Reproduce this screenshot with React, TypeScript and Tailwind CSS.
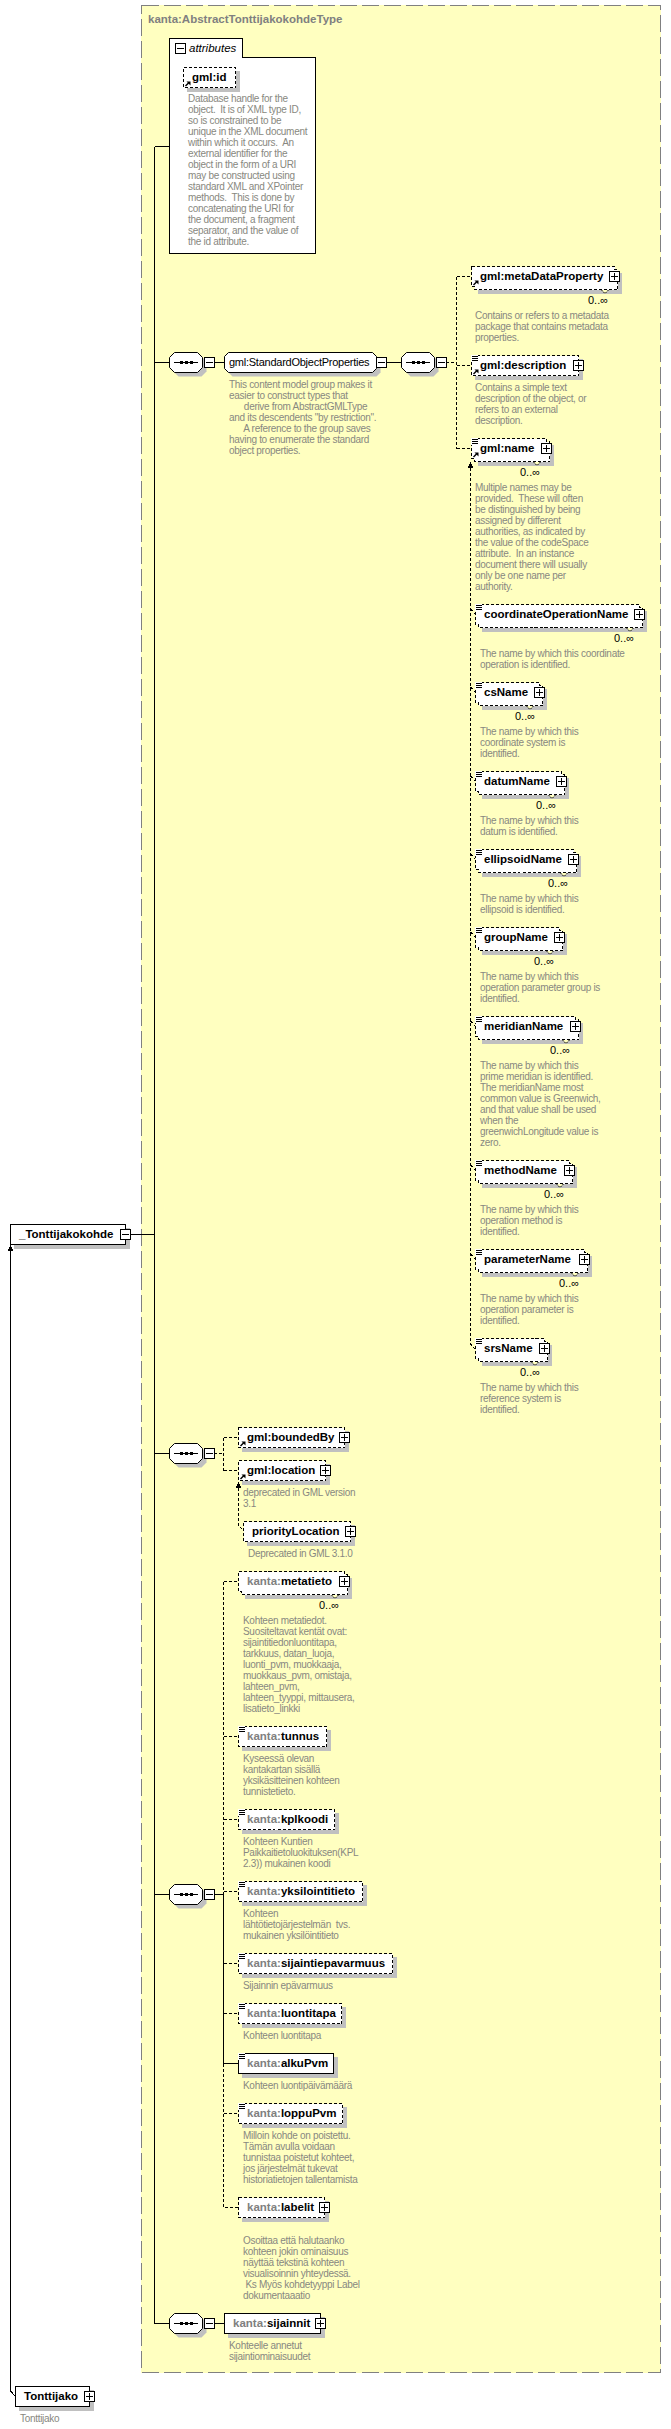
type BoxProps = {
  pos: string;
  w: number;
  prefix?: string;
  label: string;
  many?: boolean;
  solid?: boolean;
  bars?: boolean;
  link?: boolean;
  plus?: boolean;
  minus?: boolean;
};

const Toggle = ({ x, y, minus }: { x: number; y: number; minus?: boolean }) => (
  <g>
    <rect x={x + 0.5} y={y + 0.5} width={10} height={10} fill="#fff" stroke="#000" />
    <path d={`M${x + 2} ${y + 5.5}H${x + 9}`} stroke="#000" />
    {!minus && <path d={`M${x + 5.5} ${y + 2}V${y + 9}`} stroke="#000" />}
  </g>
);

// element node, with the stacked outline when it can occur many times
const Box = ({ pos, w, prefix, label, many, solid, bars, link, plus, minus }: BoxProps) => {
  const outline = many
    ? `0.5,0.5 ${w + 0.5},0.5 ${w + 0.5},3.5 ${w + 3.5},3.5 ${w + 3.5},23.5 3.5,23.5 3.5,20.5 0.5,20.5`
    : `0.5,0.5 ${w + 0.5},0.5 ${w + 0.5},20.5 0.5,20.5`;
  const off = many ? 7 : 4;
  return (
    <div className={`absolute ${pos}`}>
      <svg className="absolute left-0 top-0 overflow-visible" width={w + 12} height={30} shapeRendering="crispEdges">
        <rect x={off} y={off} width={w + 1} height={21} fill="#c0c0c0" />
        {many && (
          <polygon
            points={`${w - 13},23.5 ${w - 9},27.5 ${w - 5},23.5`}
            fill="#ffffc0"
            stroke="#000"
            strokeDasharray="2 1"
            shapeRendering="auto"
          />
        )}
        <polygon points={outline} fill="#fff" stroke="#000" strokeDasharray={solid ? undefined : "3 2"} />
        {bars && (
          <g>
            <rect x={0} y={0} width={7} height={7} fill="#fff" />
            <path d="M1 1.5H7M1 3.5H7M1 5.5H7" stroke="#000" />
          </g>
        )}
        {link && (
          <g shapeRendering="auto">
            <path d="M2.5 19L6 15.5" stroke="#000" strokeWidth={1.5} />
            <path d="M3.5 14.5H7.5V18.5Z" fill="#000" />
          </g>
        )}
        {plus && <Toggle x={w - 5} y={5} />}
        {minus && <Toggle x={w - 5} y={5} minus />}
      </svg>
      <div className="absolute left-[9px] top-0 h-[20px] whitespace-pre text-[11.5px] font-bold leading-[20px] text-black">
        {prefix && <span className="text-[#808080]">{prefix}</span>}
        {label}
      </div>
    </div>
  );
};

// the sequence compositor: octagon, three dots, collapse box
const Sequence = ({ pos }: { pos: string }) => {
  const points = "5.5,0.5 28.5,0.5 33.5,5.5 33.5,15.5 28.5,20.5 5.5,20.5 0.5,15.5 0.5,5.5";
  return (
    <svg className={`absolute overflow-visible ${pos}`} width={46} height={26}>
      <polygon points={points} fill="#c0c0c0" transform="translate(4 4)" />
      <polygon points={points} fill="#fff" stroke="#000" />
      <path d="M5 10.5H29" stroke="#000" shapeRendering="crispEdges" />
      <path d="M11 9h3v3h-3zM16 9h3v3h-3zM21 9h3v3h-3z" fill="#000" />
      <g shapeRendering="crispEdges">
        <Toggle x={35} y={5} minus />
      </g>
    </svg>
  );
};

const Note = ({ pos, lines }: { pos: string; lines: string[] }) => (
  <div className={`absolute whitespace-pre text-[10px] leading-[11px] tracking-[-0.3px] text-[#888880] ${pos}`}>
    {lines.map((line, i) => (
      <div key={i}>{line}</div>
    ))}
  </div>
);

const Occurs = ({ pos }: { pos: string }) => (
  <div className={`absolute whitespace-pre text-[11px] leading-[12px] text-black ${pos}`}>0..∞</div>
);

const dashedLines = [
  "M445.5 362.5H456.5",
  "M456.5 276.5V448.5",
  "M456.5 276.5H471",
  "M456.5 365.5H471",
  "M456.5 448.5H471",
  "M470.5 468V1344L475 1349",
  "M470.5 609L475 614",
  "M470.5 687L475 692",
  "M470.5 776L475 781",
  "M470.5 854L475 859",
  "M470.5 932L475 937",
  "M470.5 1021L475 1026",
  "M470.5 1165L475 1170",
  "M470.5 1254L475 1259",
  "M214 1453.5H223.5",
  "M223.5 1437.5V1470.5",
  "M223.5 1437.5H238",
  "M223.5 1470.5H238",
  "M238.5 1488V1525L243 1530",
  "M223.5 1581.5V1894",
  "M223.5 2063.5V2207.5H238",
  "M223.5 1581.5H238",
  "M223.5 1736.5H238",
  "M223.5 1819.5H238",
  "M223.5 1891.5H238",
  "M223.5 1963.5H238",
  "M223.5 2013.5H238",
  "M223.5 2113.5H238",
];

const solidLines = [
  "M154.5 146.5V2323.5",
  "M154.5 146.5H169",
  "M154.5 362.5H169",
  "M213 362.5H224",
  "M386 362.5H401",
  "M126 1234.5H154",
  "M154.5 1453.5H169",
  "M154.5 1894.5H169",
  "M213 1894.5H223.5",
  "M223.5 1894V2063.5H238",
  "M154.5 2323.5H169",
  "M213 2323.5H224",
  "M10.5 1250V2391L15 2396",
];

export default function App() {
  return (
    <div className="relative h-[2429px] w-[671px] overflow-hidden bg-white font-['Liberation_Sans',Arial,sans-serif]">
      {/* the complex type panel */}
      <div className="absolute left-[141px] top-[5px] h-[2368px] w-[520px] bg-[#ffffc0]">
        <svg className="absolute left-0 top-0" width={520} height={2368} shapeRendering="crispEdges">
          <rect x={0.5} y={0.5} width={519} height={2367} fill="none" stroke="#808080" strokeDasharray="17 5" />
        </svg>
        <div className="absolute left-[7px] top-[8px] whitespace-pre text-[11.5px] font-bold leading-[13px] text-[#808080]">
          kanta:AbstractTonttijakokohdeType
        </div>
      </div>

      <svg className="absolute left-0 top-0" width={671} height={2429} fill="none" shapeRendering="crispEdges">
        {solidLines.map((d) => (
          <path key={d} d={d} stroke="#000" />
        ))}
        {dashedLines.map((d) => (
          <path key={d} d={d} stroke="#000" strokeDasharray="3 2" />
        ))}
        <path d="M470.5 462L467.5 468H473.5Z" fill="#000" />
        <path d="M238.5 1482L235.5 1488H241.5Z" fill="#000" />
        <path d="M10.5 1245L7.5 1251H13.5Z" fill="#000" />
      </svg>

      {/* attributes */}
      <svg className="absolute left-[169px] top-[38px] overflow-visible" width={147} height={216} shapeRendering="crispEdges">
        <polygon points="0.5,0.5 73.5,0.5 73.5,19.5 146.5,19.5 146.5,215.5 0.5,215.5" fill="#fff" stroke="#000" />
        <Toggle x={6} y={5} minus />
      </svg>
      <div className="absolute left-[189px] top-[42px] whitespace-pre text-[11.5px] italic leading-[13px] text-black">attributes</div>
      <Box pos="left-[183px] top-[67px]" w={52} label="gml:id" link />
      <Note
        pos="left-[188px] top-[93px]"
        lines={[
          "Database handle for the",
          "object.  It is of XML type ID,",
          "so is constrained to be",
          "unique in the XML document",
          "within which it occurs.  An",
          "external identifier for the",
          "object in the form of a URI",
          "may be constructed using",
          "standard XML and XPointer",
          "methods.  This is done by",
          "concatenating the URI for",
          "the document, a fragment",
          "separator, and the value of",
          "the id attribute.",
        ]}
      />

      {/* standard object properties */}
      <Sequence pos="left-[169px] top-[352px]" />
      <svg className="absolute left-[224px] top-[352px] overflow-visible" width={165} height={26}>
        <polygon points="4.5,0.5 148.5,0.5 152.5,4.5 152.5,16.5 148.5,20.5 4.5,20.5 0.5,16.5 0.5,4.5" fill="#c0c0c0" transform="translate(4 4)" />
        <polygon points="4.5,0.5 148.5,0.5 152.5,4.5 152.5,16.5 148.5,20.5 4.5,20.5 0.5,16.5 0.5,4.5" fill="#fff" stroke="#000" />
        <g shapeRendering="crispEdges">
          <Toggle x={152} y={5} minus />
        </g>
      </svg>
      <div className="absolute left-[229px] top-[352px] whitespace-pre text-[11px] leading-[20px] tracking-[-0.25px] text-black">gml:StandardObjectProperties</div>
      <Note
        pos="left-[229px] top-[379px]"
        lines={[
          "This content model group makes it",
          "easier to construct types that",
          "      derive from AbstractGMLType",
          "and its descendents \"by restriction\".",
          "      A reference to the group saves",
          "having to enumerate the standard",
          "object properties.",
        ]}
      />
      <Sequence pos="left-[401px] top-[352px]" />

      <Box pos="left-[471px] top-[266px]" w={143} label="gml:metaDataProperty" many link plus />
      <Occurs pos="left-[588px] top-[294px]" />
      <Note pos="left-[475px] top-[310px]" lines={["Contains or refers to a metadata", "package that contains metadata", "properties."]} />

      <Box pos="left-[471px] top-[355px]" w={107} label="gml:description" bars link plus />
      <Note pos="left-[475px] top-[382px]" lines={["Contains a simple text", "description of the object, or", "refers to an external", "description."]} />

      <Box pos="left-[471px] top-[438px]" w={75} label="gml:name" many bars link plus />
      <Occurs pos="left-[520px] top-[466px]" />
      <Note
        pos="left-[475px] top-[482px]"
        lines={[
          "Multiple names may be",
          "provided.  These will often",
          "be distinguished by being",
          "assigned by different",
          "authorities, as indicated by",
          "the value of the codeSpace",
          "attribute.  In an instance",
          "document there will usually",
          "only be one name per",
          "authority.",
        ]}
      />

      <Box pos="left-[475px] top-[604px]" w={164} label="coordinateOperationName" many bars plus />
      <Occurs pos="left-[614px] top-[632px]" />
      <Note pos="left-[480px] top-[648px]" lines={["The name by which this coordinate", "operation is identified."]} />

      <Box pos="left-[475px] top-[682px]" w={64} label="csName" many bars plus />
      <Occurs pos="left-[515px] top-[710px]" />
      <Note pos="left-[480px] top-[726px]" lines={["The name by which this", "coordinate system is", "identified."]} />

      <Box pos="left-[475px] top-[771px]" w={86} label="datumName" many bars plus />
      <Occurs pos="left-[536px] top-[799px]" />
      <Note pos="left-[480px] top-[815px]" lines={["The name by which this", "datum is identified."]} />

      <Box pos="left-[475px] top-[849px]" w={98} label="ellipsoidName" many bars plus />
      <Occurs pos="left-[548px] top-[877px]" />
      <Note pos="left-[480px] top-[893px]" lines={["The name by which this", "ellipsoid is identified."]} />

      <Box pos="left-[475px] top-[927px]" w={84} label="groupName" many bars plus />
      <Occurs pos="left-[534px] top-[955px]" />
      <Note pos="left-[480px] top-[971px]" lines={["The name by which this", "operation parameter group is", "identified."]} />

      <Box pos="left-[475px] top-[1016px]" w={100} label="meridianName" many bars plus />
      <Occurs pos="left-[550px] top-[1044px]" />
      <Note
        pos="left-[480px] top-[1060px]"
        lines={[
          "The name by which this",
          "prime meridian is identified.",
          "The meridianName most",
          "common value is Greenwich,",
          "and that value shall be used",
          "when the",
          "greenwichLongitude value is",
          "zero.",
        ]}
      />

      <Box pos="left-[475px] top-[1160px]" w={94} label="methodName" many bars plus />
      <Occurs pos="left-[544px] top-[1188px]" />
      <Note pos="left-[480px] top-[1204px]" lines={["The name by which this", "operation method is", "identified."]} />

      <Box pos="left-[475px] top-[1249px]" w={109} label="parameterName" many bars plus />
      <Occurs pos="left-[559px] top-[1277px]" />
      <Note pos="left-[480px] top-[1293px]" lines={["The name by which this", "operation parameter is", "identified."]} />

      <Box pos="left-[475px] top-[1338px]" w={69} label="srsName" many bars plus />
      <Occurs pos="left-[520px] top-[1366px]" />
      <Note pos="left-[480px] top-[1382px]" lines={["The name by which this", "reference system is", "identified."]} />

      {/* global element and its substitution */}
      <Box pos="left-[10px] top-[1224px]" w={115} label="_Tonttijakokohde" solid minus />
      <Box pos="left-[15px] top-[2386px]" w={74} label="Tonttijako" solid plus />
      <Note pos="left-[20px] top-[2413px]" lines={["Tonttijako"]} />

      {/* location */}
      <Sequence pos="left-[169px] top-[1443px]" />
      <Box pos="left-[238px] top-[1427px]" w={106} label="gml:boundedBy" link plus />
      <Box pos="left-[238px] top-[1460px]" w={87} label="gml:location" link plus />
      <Note pos="left-[243px] top-[1487px]" lines={["deprecated in GML version", "3.1"]} />
      <Box pos="left-[243px] top-[1521px]" w={107} label="priorityLocation" plus />
      <Note pos="left-[248px] top-[1548px]" lines={["Deprecated in GML 3.1.0"]} />

      {/* kanta properties */}
      <Box pos="left-[238px] top-[1571px]" w={106} prefix="kanta:" label="metatieto" many plus />
      <Occurs pos="left-[319px] top-[1599px]" />
      <Note
        pos="left-[243px] top-[1615px]"
        lines={[
          "Kohteen metatiedot.",
          "Suositeltavat kentät ovat:",
          "sijaintitiedonluontitapa,",
          "tarkkuus, datan_luoja,",
          "luonti_pvm, muokkaaja,",
          "muokkaus_pvm, omistaja,",
          "lahteen_pvm,",
          "lahteen_tyyppi, mittausera,",
          "lisatieto_linkki",
        ]}
      />
      <Box pos="left-[238px] top-[1726px]" w={88} prefix="kanta:" label="tunnus" bars />
      <Note pos="left-[243px] top-[1753px]" lines={["Kyseessä olevan", "kantakartan sisällä", "yksikäsitteinen kohteen", "tunnistetieto."]} />
      <Sequence pos="left-[169px] top-[1884px]" />
      <Box pos="left-[238px] top-[1809px]" w={96} prefix="kanta:" label="kplkoodi" bars />
      <Note pos="left-[243px] top-[1836px]" lines={["Kohteen Kuntien", "Paikkaitietoluokituksen(KPL", "2.3)) mukainen koodi"]} />
      <Box pos="left-[238px] top-[1881px]" w={124} prefix="kanta:" label="yksilointitieto" bars />
      <Note pos="left-[243px] top-[1908px]" lines={["Kohteen", "lähtötietojärjestelmän  tvs.", "mukainen yksilöintitieto"]} />
      <Box pos="left-[238px] top-[1953px]" w={154} prefix="kanta:" label="sijaintiepavarmuus" bars />
      <Note pos="left-[243px] top-[1980px]" lines={["Sijainnin epävarmuus"]} />
      <Box pos="left-[238px] top-[2003px]" w={103} prefix="kanta:" label="luontitapa" bars />
      <Note pos="left-[243px] top-[2030px]" lines={["Kohteen luontitapa"]} />
      <Box pos="left-[238px] top-[2053px]" w={95} prefix="kanta:" label="alkuPvm" bars solid />
      <Note pos="left-[243px] top-[2080px]" lines={["Kohteen luontipäivämäärä"]} />
      <Box pos="left-[238px] top-[2103px]" w={104} prefix="kanta:" label="loppuPvm" bars />
      <Note
        pos="left-[243px] top-[2130px]"
        lines={["Milloin kohde on poistettu.", "Tämän avulla voidaan", "tunnistaa poistetut kohteet,", "jos järjestelmät tukevat", "historiatietojen tallentamista"]}
      />
      <Box pos="left-[238px] top-[2197px]" w={86} prefix="kanta:" label="labelit" plus />
      <Note
        pos="left-[243px] top-[2235px]"
        lines={["Osoittaa että halutaanko", "kohteen jokin ominaisuus", "näyttää tekstinä kohteen", "visualisoinnin yhteydessä.", " Ks Myös kohdetyyppi Label", "dokumentaaatio"]}
      />

      <Sequence pos="left-[169px] top-[2313px]" />
      <Box pos="left-[224px] top-[2313px]" w={96} prefix="kanta:" label="sijainnit" solid plus />
      <Note pos="left-[229px] top-[2340px]" lines={["Kohteelle annetut", "sijaintiominaisuudet"]} />
    </div>
  );
}
